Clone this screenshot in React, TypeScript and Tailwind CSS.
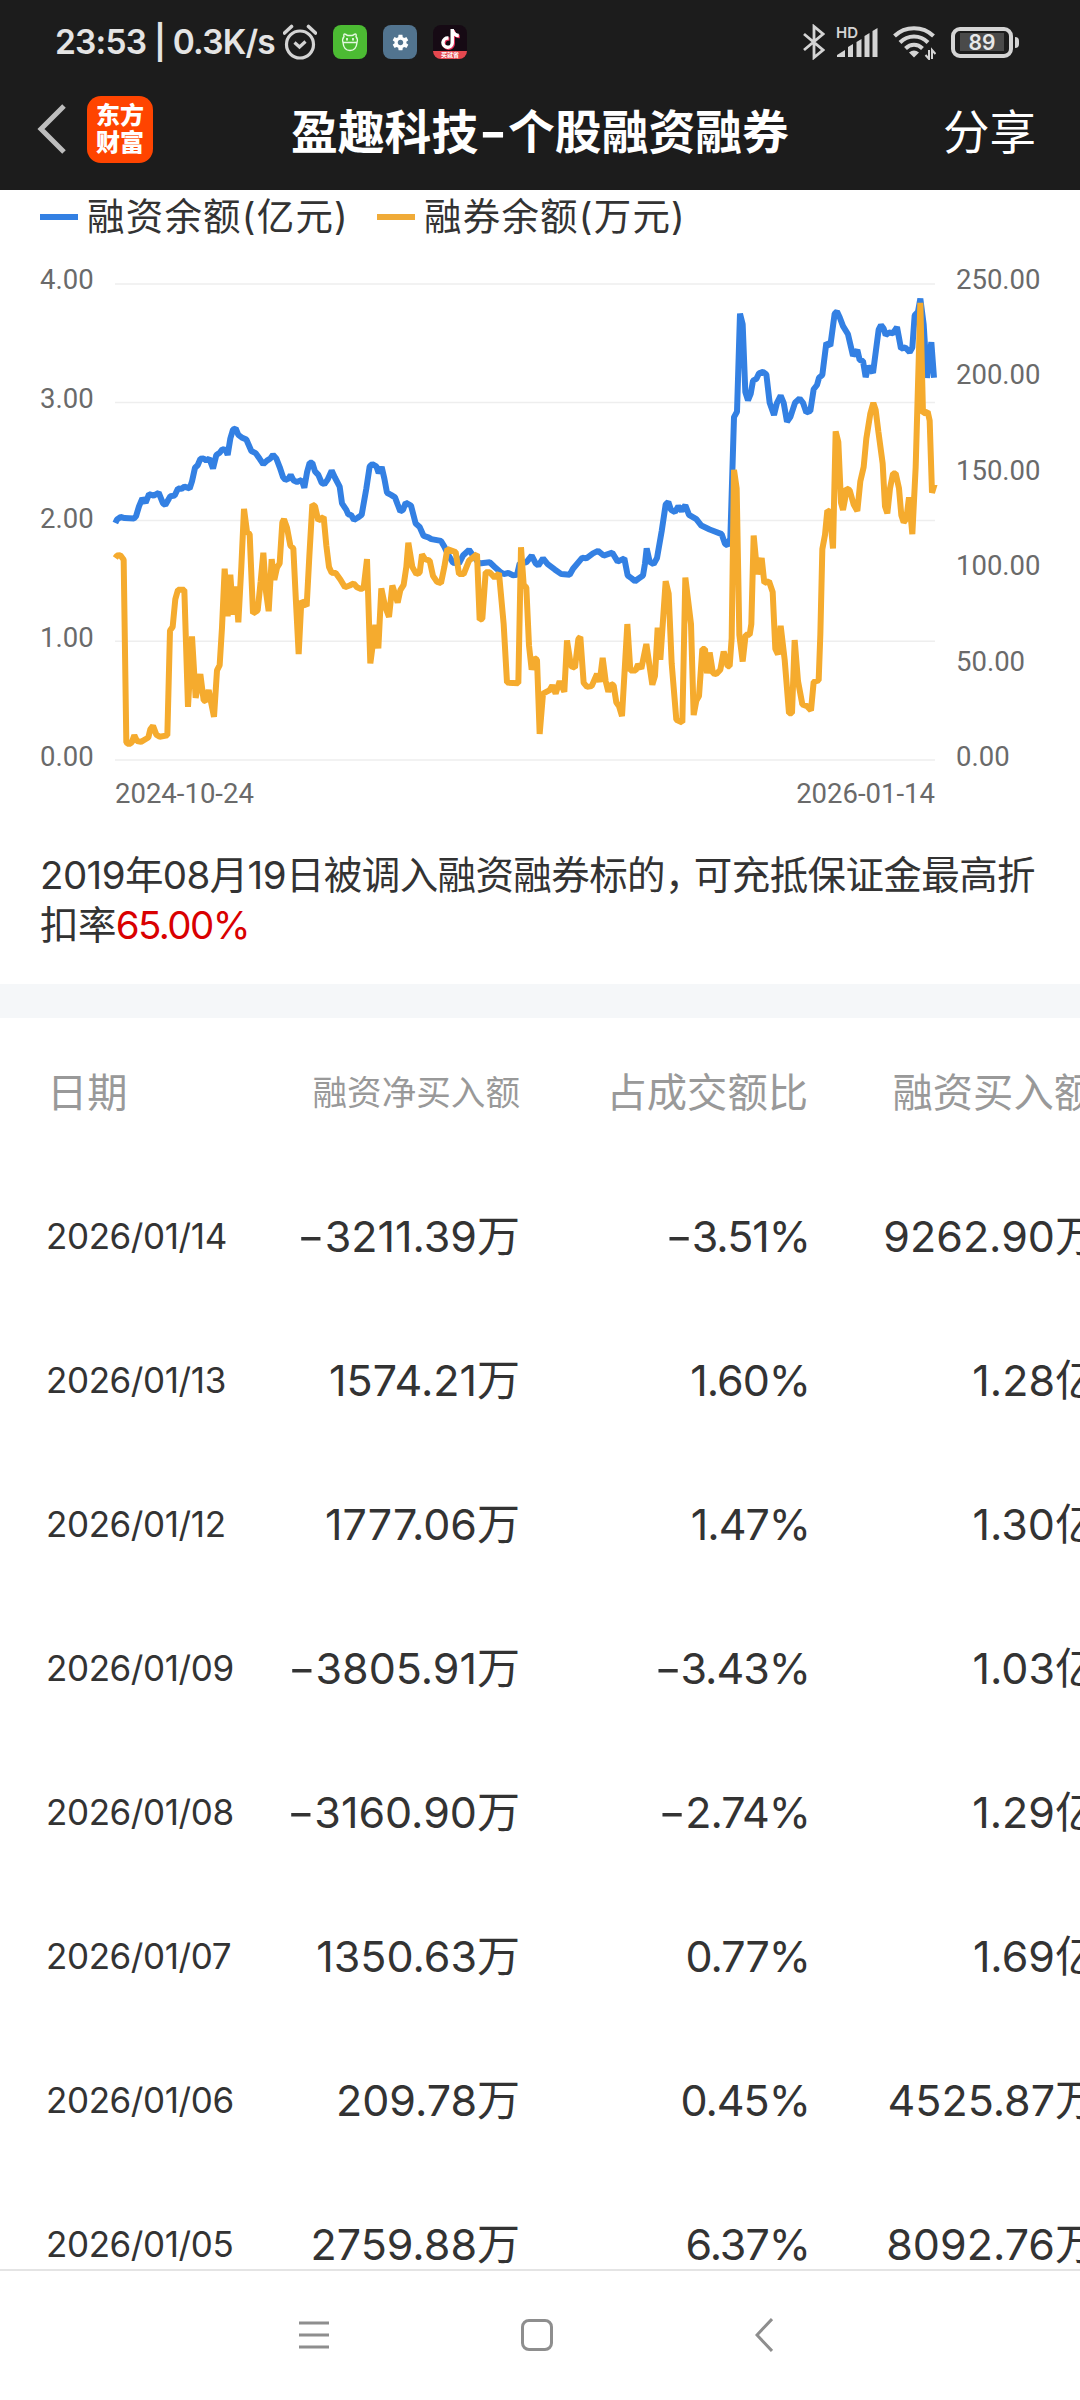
import { FaTiktok } from "react-icons/fa";
import { IoMdSettings } from "react-icons/io";

const leftTicks = ["4.00", "3.00", "2.00", "1.00", "0.00"];
const rightTicks = ["250.00", "200.00", "150.00", "100.00", "50.00", "0.00"];
const gridLines = [67, 399, 730, 1068, 1401];

const financing =
  "347,737 352,727 363,720 375,723 403,724 409,718 418,690 428,668 438,680 448,656 462,660 477,652 490,682 497,686 512,662 525,660 535,640 546,641 554,635 570,640 577,620 586,582 594,575 602,557 612,556 620,562 629,556 640,584 650,546 660,540 668,530 678,532 684,546 692,500 700,475 708,472 716,490 726,497 740,503 755,535 768,541 780,557 791,572 802,562 812,556 820,546 830,556 840,580 850,608 857,616 867,612 873,602 882,618 892,622 906,616 914,638 922,595 930,568 938,568 946,592 956,602 966,624 974,628 984,615 996,590 1006,610 1020,635 1027,682 1040,700 1046,713 1054,714 1063,728 1074,722 1086,714 1100,640 1110,578 1118,572 1130,578 1137,597 1146,580 1154,612 1162,652 1174,658 1186,665 1194,685 1202,704 1210,700 1218,680 1234,688 1248,738 1260,748 1272,773 1286,777 1295,782 1324,787 1334,803 1345,825 1360,848 1378,850 1390,828 1408,812 1420,828 1438,850 1470,847 1485,860 1502,874 1512,880 1526,877 1540,883 1552,882 1560,850 1580,847 1596,828 1608,850 1616,856 1630,836 1644,852 1665,867 1685,880 1710,882 1720,865 1748,834 1760,836 1780,822 1795,815 1812,828 1838,820 1854,845 1874,836 1884,884 1896,892 1906,900 1916,893 1930,884 1936,850 1941,808 1950,845 1962,852 1972,835 1986,760 1998,685 2006,678 2014,700 2026,706 2036,690 2046,703 2057,687 2068,714 2090,726 2105,744 2130,755 2166,768 2176,795 2184,800 2192,780 2203,440 2212,425 2221,150 2229,180 2237,370 2245,393 2253,375 2260,338 2270,333 2278,317 2290,313 2300,320 2310,400 2323,434 2332,400 2343,380 2352,400 2362,453 2372,440 2386,400 2400,388 2410,400 2420,427 2432,423 2442,362 2452,350 2458,330 2468,322 2480,232 2492,240 2505,150 2512,144 2520,160 2530,185 2545,208 2560,268 2573,252 2580,280 2590,283 2598,328 2607,297 2620,316 2637,195 2644,182 2652,192 2658,210 2668,203 2680,205 2692,188 2704,248 2717,245 2730,258 2738,245 2745,155 2755,145 2762,108 2772,180 2782,330 2795,230 2803,330";

const lending =
  "347,835 352,828 362,827 372,840 380,1352 388,1357 396,1352 404,1332 412,1348 424,1350 446,1338 452,1315 460,1305 470,1330 480,1336 503,1332 511,1038 519,1028 527,950 535,924 554,924 565,1252 577,1055 588,1227 602,1160 612,1234 618,1236 627,1205 643,1280 652,1150 660,1135 667,1030 675,865 684,998 692,882 700,994 708,915 716,1015 725,860 733,697 742,762 750,768 760,990 774,982 783,900 791,820 799,930 807,984 816,838 824,896 832,862 840,850 848,735 853,726 862,750 872,800 881,808 889,960 897,1104 905,955 921,970 929,830 938,685 946,690 956,730 972,720 980,800 988,860 996,876 1008,877 1022,895 1036,917 1050,912 1062,906 1072,917 1084,922 1092,918 1102,838 1112,1130 1127,1022 1136,1088 1145,920 1156,970 1168,1000 1178,912 1194,960 1202,925 1212,910 1220,860 1226,792 1238,860 1250,880 1260,876 1267,825 1276,838 1290,842 1300,885 1312,902 1324,905 1334,860 1343,810 1368,818 1378,880 1392,880 1408,842 1432,824 1440,1008 1448,1005 1458,875 1470,875 1485,890 1498,878 1512,1020 1522,1184 1556,1186 1564,805 1572,910 1580,918 1588,1080 1596,1148 1604,1115 1612,1120 1620,1328 1630,1215 1650,1205 1658,1192 1668,1215 1680,1180 1694,1210 1702,1066 1714,1138 1726,1142 1736,1062 1742,1056 1752,1185 1762,1196 1776,1194 1792,1160 1800,1182 1809,1115 1818,1180 1826,1210 1834,1188 1842,1192 1850,1240 1858,1250 1867,1278 1883,1020 1892,1150 1908,1150 1915,1133 1925,1145 1940,1076 1950,1140 1958,1190 1966,1165 1974,1030 1982,1120 1998,900 2007,935 2016,1130 2030,1288 2048,1296 2057,890 2074,1020 2082,1275 2090,1235 2098,1222 2108,1090 2116,1090 2122,1158 2130,1100 2140,1158 2150,1160 2162,1148 2172,1097 2184,1138 2190,1138 2196,1060 2203,588 2211,640 2219,1050 2229,1125 2238,1050 2250,1050 2255,1020 2262,772 2273,880 2286,835 2294,905 2308,900 2319,930 2327,1090 2335,1105 2343,1025 2355,1120 2368,1270 2377,1270 2385,1065 2395,1180 2408,1245 2422,1250 2434,1262 2442,1182 2457,1178 2462,1050 2468,810 2476,770 2483,702 2490,705 2500,808 2508,480 2516,510 2524,680 2530,700 2536,670 2540,640 2550,645 2562,685 2573,703 2582,620 2592,580 2600,500 2612,430 2621,400 2628,420 2636,480 2649,570 2656,690 2663,710 2671,640 2680,598 2688,598 2698,640 2705,715 2712,735 2720,725 2728,665 2738,768 2748,580 2762,120 2770,430 2784,425 2790,450 2797,652 2805,628";

const rows = [
  { date: "2026/01/14", net: "-3211.39万", ratio: "-3.51%", buy: "9262.90万" },
  { date: "2026/01/13", net: "1574.21万", ratio: "1.60%", buy: "1.28亿" },
  { date: "2026/01/12", net: "1777.06万", ratio: "1.47%", buy: "1.30亿" },
  { date: "2026/01/09", net: "-3805.91万", ratio: "-3.43%", buy: "1.03亿" },
  { date: "2026/01/08", net: "-3160.90万", ratio: "-2.74%", buy: "1.29亿" },
  { date: "2026/01/07", net: "1350.63万", ratio: "0.77%", buy: "1.69亿" },
  { date: "2026/01/06", net: "209.78万", ratio: "0.45%", buy: "4525.87万" },
  { date: "2026/01/05", net: "2759.88万", ratio: "6.37%", buy: "8092.76万" },
];

// Amount with a wide minus sign
function Amount({ value }: { value: string }) {
  if (!value.startsWith("-")) return <>{value}</>;
  return (
    <>
      <span className="mr-[4px] inline-block scale-x-[1.4]">-</span>
      {value.slice(1)}
    </>
  );
}

function StatusBar() {
  return (
    <div className="flex h-[84px] items-center pl-[55px] pr-[61px] text-[#e4e4e4]">
      <span className="w-[228px] whitespace-nowrap text-[33.5px] font-semibold tracking-[-0.8px]">23:53 | 0.3K/s</span>
      {/* Alarm clock */}
      <svg className="h-[36px] w-[34px]" viewBox="0 0 34 36" fill="none" stroke="#d4d4d4" strokeWidth="3.2">
        <circle cx="17" cy="20.5" r="13.500" />
        <path d="M1.500 9 L8.500 2.500 M32.500 9 L25.500 2.500" strokeWidth="3.600" strokeLinecap="round" />
        <path d="M11.500 18.500 L16.500 23 L22.500 17.500" />
      </svg>
      <div className="ml-4 flex gap-4">
        <div className="flex h-[34px] w-[34px] items-center justify-center rounded-lg bg-[#4cbb33]">
          <svg className="h-5 w-5" viewBox="0 0 20 20" fill="none" stroke="#e4f8e0" strokeWidth="1.4">
            <path d="M4 4.500 Q3 1 6 2.500 Q7 3.500 8 3.500 H12 Q13 3.500 14 2.500 Q17 1 16 4.500 C18 7 17.500 9 17 10.500 C16.500 16 13.500 18.500 10 18.500 C6.500 18.500 3.500 16 3 10.500 C2.500 9 2 7 4 4.500 Z M2.500 10.500 H17.500" />
            <path d="M7 6 V8.500 M13 6 V8.500" strokeWidth="1.800" />
          </svg>
        </div>
        <div className="flex h-[34px] w-[34px] items-center justify-center rounded-lg bg-[#52748f]">
          <IoMdSettings className="h-[19px] w-[19px] text-white" />
        </div>
        <div className="flex h-[34px] w-[34px] flex-col items-center overflow-hidden rounded-lg bg-[#160a14]">
          <FaTiktok className="mt-1 h-5 w-[18px] shrink-0 text-white drop-shadow-[1px_1px_0_#e8305a]" />
          <div className="mt-[2px] h-2 w-full bg-[#e5484f] text-center text-[6px] font-bold leading-[8px] text-white">买就省</div>
        </div>
      </div>
      <div className="ml-auto flex items-center">
        <svg className="h-[36px] w-[22px]" viewBox="0 0 22 36" fill="none" stroke="#d4d4d4" strokeWidth="2.8">
          <path d="M1 10 L20 26 L11 33.500 V2.500 L20 10 L1 26" />
        </svg>
        {/* Mobile signal */}
        <svg className="ml-[11px] h-[34px] w-[43px] overflow-visible" viewBox="0 0 43 34" fill="#d4d4d4">
          <text x="0" y="13" fontSize="15" fontWeight="600" fontFamily="Inter, sans-serif">HD</text>
          <path d="M1 32 V30 L9 25 V32 Z M12 32 V22 L17 19 V32 Z M20.500 32 V17 L25.500 14 V32 Z M28.500 32 V11 L33.500 8 V32 Z M36.500 32 V6 L41.500 3 V32 Z" />
        </svg>
        <svg className="ml-[14px] h-[36px] w-[43px]" viewBox="0 0 43 36" fill="none" stroke="#d4d4d4" strokeWidth="4">
          <path d="M1.500 12 C12 1.500 30 1.500 40.500 12 M7 18.500 C15 10.500 27 10.500 35 18.500 M12.500 24.500 C17.500 19.500 24.500 19.500 29.500 24.500" />
          <path d="M16 28.500 Q21 24.500 26 28.500 L21 33.500 Z" fill="#d4d4d4" stroke="none" />
          <path d="M36 26 V35 L32.500 31 M39 35 V26 L42.500 30" strokeWidth="2" />
        </svg>
        <div className="ml-[15px] flex h-[31px] w-[62px] items-center justify-center rounded-[9px] border-4 border-[#d4d4d4]">
          <div className="flex h-[18px] w-[44px] items-center justify-center bg-[#4a4a4a] text-[21px] font-semibold leading-none text-[#e8e8e8]">89</div>
        </div>
        <div className="ml-[2px] h-[11px] w-1 rounded-r bg-[#d4d4d4]" />
      </div>
    </div>
  );
}

function TitleBar() {
  return (
    <div className="flex h-[106px] items-center pb-[16px] pl-[37px] pr-[44px] text-white">
      <svg className="h-[50px] w-[29px]" viewBox="0 0 29 50" fill="none" stroke="#bdbdbd" strokeWidth="5">
        <path d="M27 2 L4 25 L27 48" />
      </svg>
      <div className="ml-[21px] flex h-[67px] w-[66px] flex-col items-center justify-center rounded-[14px] bg-[#ff4400] text-[24px] font-black leading-[27px]">
        <span>东方</span>
        <span>财富</span>
      </div>
      <h1 className="ml-[138px] whitespace-nowrap pt-[7px] text-[46.800px] font-bold">
        盈趣科技<span className="mx-[4px] inline-block scale-x-[1.3]">-</span>个股融资融券
      </h1>
      <span className="ml-auto pt-[7px] text-[46.500px]">分享</span>
    </div>
  );
}

function Chart() {
  return (
    <section className="h-[636px]">
      <div className="flex h-[54px] items-center pl-10 text-[37.500px] tracking-[1.200px] text-[#333333]">
        <span className="h-[6px] w-[38px] bg-[#3380e3]" />
        <span className="ml-[9px] w-[290px] whitespace-nowrap">融资余额(亿元)</span>
        <span className="h-[6px] w-[38px] bg-[#f0ab38]" />
        <span className="ml-[9px] whitespace-nowrap">融券余额(万元)</span>
      </div>
      <div className="mt-[22px] flex h-[505px] font-[Roboto] text-[27.500px] leading-[28px] text-[#6a6a6a]">
        <div className="flex w-[115px] flex-col justify-between pl-10">
          {leftTicks.map((t) => (
            <span key={t}>{t}</span>
          ))}
        </div>
        <svg className="mt-[18px] h-[476px] w-[820px] overflow-visible" viewBox="346 67 2460 1334" preserveAspectRatio="none" fill="none">
          {gridLines.map((y) => (
            <path key={y} d={`M346 ${y} H2806`} stroke="#eeeeee" strokeWidth="1.500" vectorEffect="non-scaling-stroke" />
          ))}
          <polyline points={financing} stroke="#3380e3" strokeWidth="6" strokeLinejoin="bevel" vectorEffect="non-scaling-stroke" />
          <polyline points={lending} stroke="#f5ab2e" strokeWidth="6" strokeLinejoin="bevel" vectorEffect="non-scaling-stroke" />
        </svg>
        <div className="flex flex-col justify-between pl-[21px]">
          {rightTicks.map((t) => (
            <span key={t}>{t}</span>
          ))}
        </div>
      </div>
      <div className="mt-[9px] flex justify-between pl-[115px] pr-[145px] font-[Roboto] text-[27.500px] leading-[28px] text-[#6a6a6a]">
        <span>2024-10-24</span>
        <span>2026-01-14</span>
      </div>
    </section>
  );
}

function MarginTable() {
  return (
    <section className="h-[1251px] overflow-hidden text-[#333333]">
      <div className="flex h-[146px] items-center whitespace-nowrap pl-[47px] pt-[4px] text-right text-[40.300px] text-[#999999]">
        <span className="w-[174px] shrink-0 text-left">日期</span>
        <span className="w-[299px] shrink-0 text-[34.600px]">融资净买入额</span>
        <span className="w-[288px] shrink-0">占成交额比</span>
        <span className="w-[286px] shrink-0">融资买入额</span>
      </div>
      {rows.map((row) => (
        <div key={row.date} className="flex h-[144px] items-center whitespace-nowrap pl-[46px] text-right text-[43px]">
          <span className="w-[190px] shrink-0 text-left text-[35px] tracking-[-0.4px]">{row.date}</span>
          <span className="w-[284px] shrink-0">
            <Amount value={row.net} />
          </span>
          <span className="w-[290px] shrink-0 tracking-[-1px]">
            <Amount value={row.ratio} />
          </span>
          <span className="w-[288px] shrink-0">{row.buy}</span>
        </div>
      ))}
    </section>
  );
}

function NavBar() {
  return (
    <nav className="flex h-[131px] items-center border-t-2 border-[#e4e4e4] bg-white pb-[2px] pl-[298px]">
      <svg className="h-8 w-8" viewBox="0 0 32 32" stroke="#8e8e8e" strokeWidth="3">
        <path d="M1 4 H31 M1 16 H31 M1 28 H31" />
      </svg>
      <div className="ml-[191px] h-8 w-8 rounded-lg border-[3px] border-[#8e8e8e]" />
      <svg className="ml-[202px] h-[34px] w-[18px]" viewBox="0 0 18 34" fill="none" stroke="#8e8e8e" strokeWidth="3">
        <path d="M17 1 L2 17 L17 33" />
      </svg>
    </nav>
  );
}

export default function App() {
  return (
    <div className="h-[2400px] w-[1080px] overflow-hidden bg-white font-['Inter','Noto_Sans_CJK_SC',sans-serif]">
      <header className="h-[190px] bg-[#1c1c1c]">
        <StatusBar />
        <TitleBar />
      </header>
      <Chart />
      <p className="h-[158px] pl-10 pr-9 pt-[24px] text-[38.500px] leading-[50px] tracking-[-0.600px] text-[#333333]">
        2019年08月19日被调入融资融券标的<span className="-mr-[9px]">，</span>可充抵保证金最高折扣率
        <span className="tracking-[-1.600px] text-[#d90000]">65.00%</span>
      </p>
      <div className="h-[34px] bg-[#f5f7f9]" />
      <MarginTable />
      <NavBar />
    </div>
  );
}
